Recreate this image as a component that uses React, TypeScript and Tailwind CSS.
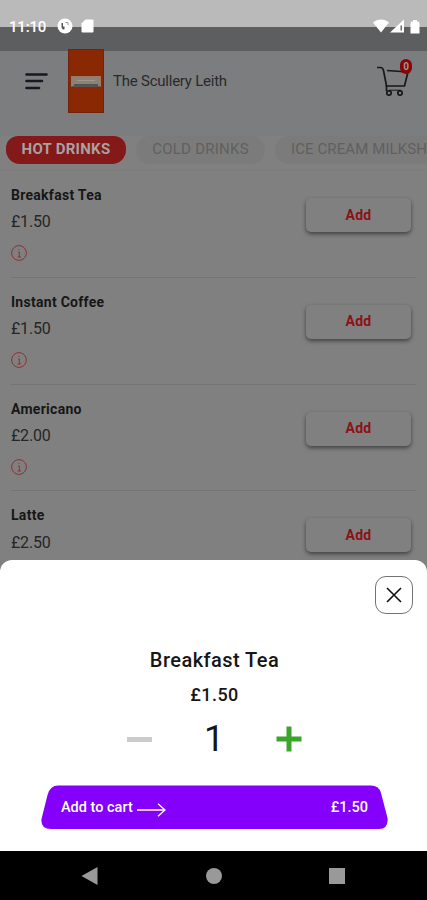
const items = [
    { name: 'Breakfast Tea', price: '£1.50' },
    { name: 'Instant Coffee', price: '£1.50' },
    { name: 'Americano', price: '£2.00' },
    { name: 'Latte', price: '£2.50' },
]

function StatusBar() {
    return (
        <div className="relative h-[51px] bg-[#5d5e60]">
            <div className="h-[27px] bg-[#bababa]" />
            <div className="absolute inset-x-0 top-[18px] flex h-4 items-center pr-[7px] pl-[9px] text-white">
                <span className="mt-[2px] w-[38px] text-[15px] leading-4 font-medium tracking-[-0.2px]">11:10</span>
                <svg className="ml-[10px]" width="16" height="16" viewBox="0 0 16 16">
                    <circle cx="8" cy="8" r="7.5" fill="currentColor" />
                    <path d="M4.500 5v4a2.400 2.400 0 0 0 3 2.300V8.500H6V5z" fill="#555658" />
                    <path d="M8.500 4.500h2.500v2.500" fill="none" stroke="#999" strokeWidth="1" />
                </svg>
                <svg className="ml-[8px]" width="13" height="14" viewBox="0 0 13 14">
                    <path d="M4.500 0.500H11.500a1 1 0 0 1 1 1v11a1 1 0 0 1-1 1h-10a1 1 0 0 1-1-1V4.500z" fill="currentColor" />
                </svg>
                <div className="ml-auto flex items-center">
                    <svg width="16" height="14" viewBox="0 0 16 14">
                        <path d="M0 3.500C4.500-.5 11.500-.5 16 3.500L8 13.500z" fill="currentColor" />
                    </svg>
                    <svg className="ml-[1px]" width="15" height="14" viewBox="0 0 15 14">
                        <path d="M0 13.500L14 0.500V13.500z" fill="currentColor" />
                        <path d="M10.500 6.500h1.500v5h-1.500z" fill="#68696b" />
                    </svg>
                    <svg className="ml-[5px]" width="10" height="15" viewBox="0 0 10 15">
                        <path d="M3 1h4v1.500h1.500L9.500 4v10.500h-9V4l1-1.500H3z" fill="currentColor" />
                    </svg>
                </div>
            </div>
        </div>
    )
}

function Header() {
    return (
        <header className="relative flex h-[85px] items-start bg-[#7b7d7f]">
            <svg className="mt-[21px] ml-[25px]" width="24" height="19" viewBox="0 0 24 19">
                <path d="M1.500 2.500h20M1.500 9h15.500M1.500 16h12.500" stroke="#171820" strokeWidth="2.600" strokeLinecap="round" />
            </svg>
            <div className="-mt-[2px] ml-[19px] flex h-[64px] w-[36px] items-center justify-center border border-[#702310] bg-[#8b2804]">
                <div className="h-[11px] w-[30px] border border-[#9b7767] border-b-[#5e5552] bg-[#8b8277]">
                    <div className="mx-auto mt-[3px] h-px w-[18px] bg-[#a29985]" />
                    <div className="mx-auto mt-[3px] h-[2px] w-[24px] bg-[#555250]" />
                </div>
            </div>
            <h1 className="mt-[20px] ml-[9px] text-[15px] leading-5 tracking-[-0.23px] text-[#292a2c]">The Scullery Leith</h1>
            <div className="relative mt-[14px] mr-[18px] ml-auto">
                <svg width="32" height="32" viewBox="0 0 32 32" fill="none" stroke="#171819" strokeWidth="1.700">
                    <path d="M0 2.500h3.500c2 0 2.500 1 3 3l3 15.500H27.500L31 7M10 5.500L31 7" />
                    <path d="M9.500 20v6" />
                    <circle cx="12" cy="28" r="2.200" />
                    <circle cx="23" cy="28" r="2.200" />
                    <path d="M12 25.200h12" strokeWidth="1" />
                </svg>
                <span className="absolute -top-[6px] left-[23px] flex h-[15px] w-[12px] items-center justify-center rounded-full bg-[#850708] text-[10px] font-bold text-[#b09090]">
                    0
                </span>
            </div>
        </header>
    )
}

function Tabs() {
    return (
        <div className="flex h-[35px] items-start overflow-hidden border-b border-[#7c7c7c] text-[15px] leading-[26px] whitespace-nowrap">
            <div className="ml-[6px] h-[28px] w-[120px] shrink-0 rounded-t-[12px] rounded-b-[14px] bg-[#831918] text-center font-bold tracking-[0.27px] text-[#aaa0a0]">HOT DRINKS</div>
            <div className="ml-[10px] h-[28px] w-[129px] shrink-0 rounded-[14px] bg-[#7b7b7b] text-center tracking-[0.25px] text-[#606060]">COLD DRINKS</div>
            <div className="ml-[10px] h-[28px] w-[190px] shrink-0 rounded-[14px] bg-[#7b7b7b] pl-[16px] tracking-[0.1px] text-[#606060]">ICE CREAM MILKSHAKES</div>
        </div>
    )
}

function MenuItem({ name, price }: { name: string; price: string }) {
    return (
        <article className="mx-[11px] flex h-[106.800px] shrink-0 justify-between border-b border-[#747474]">
            <div>
                <h2 className="mt-[14px] text-[14px] leading-5 font-bold tracking-[0.28px] text-[#171717]">{name}</h2>
                <p className="mt-[7.400px] text-[16px] leading-5 tracking-[-0.2px] text-[#262626]">{price}</p>
                <svg className="mt-[12.600px]" width="16" height="16" viewBox="0 0 16 16" fill="none" stroke="#8b3237" strokeWidth="1">
                    <circle cx="8" cy="8" r="7.400" />
                    <path d="M7 7h1.300v5M6.500 12h3.500M7.500 4.500h1" />
                </svg>
            </div>
            <button className="mt-[27px] mr-[5px] mb-auto h-[34px] w-[105px] rounded-[5px] bg-[#808080] text-[14px] font-bold tracking-[0.2px] text-[#8c1116] shadow-[0_2px_4px_rgba(0,0,0,0.5)]">
                Add
            </button>
        </article>
    )
}

function CartSheet() {
    return (
        <section className="absolute inset-x-0 top-[560px] flex h-[291px] flex-col items-center rounded-t-[12px] bg-white pl-[2px] text-[#161616]">
            <button className="mt-[16px] mr-[14px] flex size-[38px] shrink-0 items-center justify-center self-end rounded-[11px] border border-[#737373]">
                <svg width="16" height="16" viewBox="0 0 16 16">
                    <path d="M1 1l14 14M15 1L1 15" stroke="#111" strokeWidth="1.600" />
                </svg>
            </button>
            <h2 className="mt-[32px] text-[20px] leading-7 font-medium tracking-[0.45px]">Breakfast Tea</h2>
            <p className="mt-[9px] text-[18px] leading-6 font-medium tracking-[0.45px]">£1.50</p>
            <div className="mt-[12px] flex h-[40px] w-[175px] items-center justify-between">
                <span className="h-[5px] w-[25px] bg-[#cbcbcd]" />
                <span className="text-[36px] leading-10">1</span>
                <svg width="26" height="26" viewBox="0 0 26 26">
                    <path d="M10.500 0.500h5v10h10v5h-10v10h-5v-10h-10v-5h10z" fill="#3ba52b" />
                </svg>
            </div>
            <button className="relative mt-[26px] flex h-[45px] w-[347px] items-center pr-[20px] pl-[20px] text-[14.500px] font-medium text-white">
                <svg className="absolute inset-0" width="347" height="45" viewBox="0 0 347 45">
                    <path d="M17 0.500H330Q338 0.500 340 8L346.500 33Q347.500 44 338 44H10Q-.5 44 .5 34L6.500 10Q9 .5 17 .5z" fill="#8500fa" />
                </svg>
                <span className="relative">Add to cart</span>
                <svg className="relative mt-[4px] ml-[4px]" width="29" height="14" viewBox="0 0 29 14" fill="none" stroke="currentColor" strokeWidth="1.400">
                    <path d="M0 7h28M21 .8L28 7l-7 6.200" />
                </svg>
                <span className="relative ml-auto">£1.50</span>
            </button>
        </section>
    )
}

function NavBar() {
    return (
        <nav className="flex h-[49px] items-center bg-black pl-[81px]">
            <svg width="17" height="18" viewBox="0 0 17 18">
                <path d="M0.500 9L16.500 0v18z" fill="#999" />
            </svg>
            <span className="ml-[108px] size-[16px] rounded-full bg-[#999]" />
            <span className="ml-[107px] size-[16px] bg-[#999]" />
        </nav>
    )
}

export default function App() {
    return (
        <main className="relative flex h-[900px] w-[427px] flex-col overflow-hidden bg-[#808080] font-['Roboto','Liberation_Sans',sans-serif]">
            <div className="h-[851px] overflow-hidden">
                <StatusBar />
                <Header />
                <Tabs />
                <div className="flex flex-col">
                    {items.map((item) => (
                        <MenuItem key={item.name} name={item.name} price={item.price} />
                    ))}
                </div>
            </div>
            <CartSheet />
            <NavBar />
        </main>
    )
}
